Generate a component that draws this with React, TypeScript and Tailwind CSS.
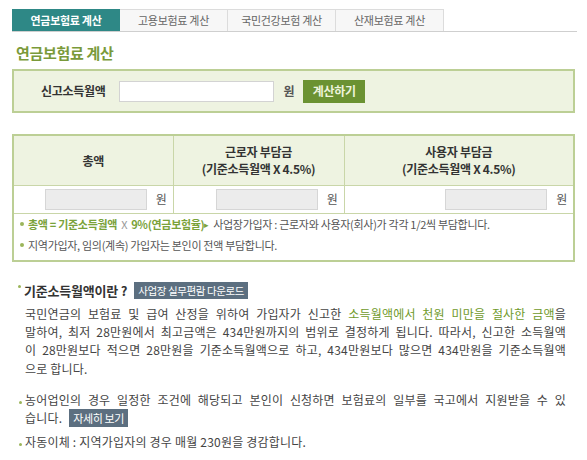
const TABS = ['연금보험료 계산', '고용보험료 계산', '국민건강보험 계산', '산재보험료 계산']

const FONT = "font-['Noto_Sans_CJK_KR','Noto_Sans',sans-serif]"

function Bullet({ className = 'bg-[#9bb55a]' }: { className?: string }) {
  return <span className={`inline-block h-[4px] w-[4px] rounded-full align-middle ${className}`} />
}

function ResultCell({ last }: { last?: boolean }) {
  return (
    <td className={`h-[28px] border-[#c9d6a8] px-0 ${last ? '' : 'border-r'}`}>
      <div className="flex items-center justify-end gap-[9px] pr-[6px]">
        <div className="h-[21px] w-[102px] border border-[#d6d6d6] bg-[#ececec]" />
        <span className="text-[12px] text-[#555]">원</span>
      </div>
    </td>
  )
}

// a full line of the description, stretched edge to edge like the original
function Line({ children }: { children: React.ReactNode }) {
  return <span className="block text-justify [text-align-last:justify]">{children}</span>
}

export default function App() {
  return (
    <div className={`h-[460px] w-[587px] overflow-hidden bg-white ${FONT} tracking-[-0.3px] text-[#555]`}>
      {/* Tabs */}
      <div className="flex pl-[12px] pr-[10px] pt-[9px]">
        <div className="flex w-full border-b border-[#cfcfcf]">
          {TABS.map((t, i) => (
            <div
              key={t}
              className={`flex h-[22px] w-[108px] items-center justify-center text-[11px] ${
                i === 0
                  ? 'bg-[#2e8886] font-bold text-white'
                  : 'border-r border-t border-[#dcdcdc] bg-[#f7f7f7] text-[#666]'
              }`}
            >
              {t}
            </div>
          ))}
        </div>
      </div>

      {/* Title */}
      <h2 className="ml-[16px] mt-[11px] text-[15px] font-bold leading-[20px] text-[#7a9a3a]">연금보험료 계산</h2>

      {/* Input box */}
      <div className="mx-[12px] mt-[6px] flex h-[44px] items-center border-2 border-[#bccf95] bg-[#eef3e1]">
        <span className="ml-[27px] text-[12px] font-bold text-[#333]">신고소득월액</span>
        <div className="ml-[14px] h-[21px] w-[155px] border border-[#d3d3d3] bg-white" />
        <span className="ml-[9px] text-[12px] font-bold text-[#555]">원</span>
        <button className="ml-[9px] h-[23px] w-[62px] bg-[#6b9232] text-[12px] font-bold text-[#eef4dc]">계산하기</button>
      </div>

      {/* Result table */}
      <div className="mx-[12px] mt-[21px] border-2 border-[#bccf95]">
        <table className="w-full border-collapse">
          <thead>
            <tr className="h-[49px] bg-[#eef3e1] text-[12px] font-bold leading-[17px] text-[#333]">
              <th className="w-[159px] border-b border-r border-[#c9d6a8] font-bold">총액</th>
              <th className="w-[171px] border-b border-r border-[#c9d6a8] font-bold">
                근로자 부담금
                <br />
                (기준소득월액 X 4.5%)
              </th>
              <th className="border-b border-[#c9d6a8] font-bold">
                사용자 부담금
                <br />
                (기준소득월액 X 4.5%)
              </th>
            </tr>
          </thead>
          <tbody>
            <tr className="border-b border-[#c9d6a8]">
              <ResultCell />
              <ResultCell />
              <ResultCell last />
            </tr>
            <tr>
              <td colSpan={3} className="px-[6px] pb-[4px] pt-0 text-[11px] leading-[21px]">
                <div className="flex items-center gap-[4px]">
                  <Bullet />
                  <span className="font-bold text-[#7aa23a]">총액 = 기준소득월액</span>
                  <span className="text-[#999]">X</span>
                  <span className="font-bold text-[#7aa23a]">9%(연금보험율)</span>
                  <span className="-ml-[4px] text-[9px] text-[#7aa23a]">▸</span>
                  <span className="text-[#555]">사업장가입자 : 근로자와 사용자(회사)가 각각 1/2씩 부담합니다.</span>
                </div>
                <div className="flex items-center gap-[4px]">
                  <Bullet />
                  <span className="text-[#555]">지역가입자, 임의(계속) 가입자는 본인이 전액 부담합니다.</span>
                </div>
              </td>
            </tr>
          </tbody>
        </table>
      </div>

      {/* Description */}
      <div className="ml-[18px] mt-[19px] flex h-[20px] items-center">
        <span className="mb-[8px] mr-[3px] h-[3px] w-[3px] rounded-full bg-[#9bb55a]" />
        <span className="text-[13px] font-bold tracking-[-0.2px] text-[#333]">기준소득월액이란 ?</span>
        <span className="ml-[7px] bg-[#5c6f80] px-[4px] text-[10.5px] leading-[17px] tracking-[-0.4px] text-white">
          사업장 실무편람 다운로드
        </span>
      </div>
      <p className="ml-[25px] mt-[4px] w-[541px] text-[12px] leading-[18.4px] tracking-[0.2px] text-[#444]">
        <Line>
          국민연금의 보험료 및 급여 산정을 위하여 가입자가 신고한{' '}
          <span className="text-[#6f9a2a]">소득월액에서 천원 미만을 절사한 금액</span>을
        </Line>
        <Line>말하여, 최저 28만원에서 최고금액은 434만원까지의 범위로 결정하게 됩니다. 따라서, 신고한 소득월액</Line>
        <Line>이 28만원보다 적으면 28만원을 기준소득월액으로 하고, 434만원보다 많으면 434만원을 기준소득월액</Line>
        <span className="block">으로 합니다.</span>
      </p>

      <div className="ml-[19px] mt-[13px] w-[547px] text-[12px] leading-[18px] tracking-[0.2px] text-[#444]">
        <div className="flex">
          <span className="mr-[3px] mt-[10px] h-[3px] w-[3px] shrink-0 rounded-full bg-[#9bb55a]" />
          <div className="flex-1">
            <Line>농어업인의 경우 일정한 조건에 해당되고 본인이 신청하면 보험료의 일부를 국고에서 지원받을 수 있</Line>
            <span className="block">
              습니다.
              <span className="ml-[7px] bg-[#5c6f80] px-[4px] py-[1px] text-[11px] tracking-[-0.4px] text-white">자세히 보기</span>
            </span>
          </div>
        </div>
        <div className="mt-[6px] flex">
          <span className="mr-[3px] mt-[10px] h-[3px] w-[3px] shrink-0 rounded-full bg-[#9bb55a]" />
          <span>자동이체 : 지역가입자의 경우 매월 230원을 경감합니다.</span>
        </div>
      </div>
    </div>
  )
}
